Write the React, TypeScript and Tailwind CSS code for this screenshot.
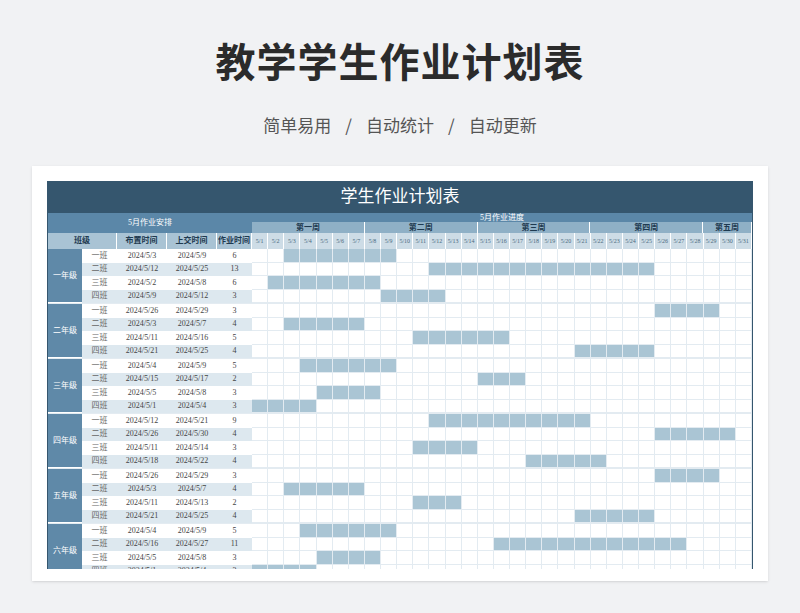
const grades = [
  { g: '一年级', rows: [[3, 9, 6], [12, 25, 13], [2, 8, 6], [9, 12, 3]] },
  { g: '二年级', rows: [[26, 29, 3], [3, 7, 4], [11, 16, 5], [21, 25, 4]] },
  { g: '三年级', rows: [[4, 9, 5], [15, 17, 2], [5, 8, 3], [1, 4, 3]] },
  { g: '四年级', rows: [[12, 21, 9], [26, 30, 4], [11, 14, 3], [18, 22, 4]] },
  { g: '五年级', rows: [[26, 29, 3], [3, 7, 4], [11, 13, 2], [21, 25, 4]] },
  { g: '六年级', rows: [[4, 9, 5], [16, 27, 11], [5, 8, 3], [1, 4, 3]] },
];
const cls = ['一班', '二班', '三班', '四班'];
const days = Array.from({ length: 31 }, (_, i) => i + 1);
const weeks = [['第一周', 7], ['第二周', 7], ['第三周', 7], ['第四周', 7], ['第五周', 3]] as const;
const F = { fontFamily: '"Liberation Serif","Noto Sans CJK SC",serif' };

export default function App() {
  return (
    <div className="w-[800px] h-[613px] bg-[#f1f2f4] flex flex-col items-center overflow-hidden" style={{ fontFamily: '"Noto Sans CJK SC",sans-serif' }}>
      <div className="mt-[34px] text-[40px] leading-[52px] font-bold text-[#2b2b2b] tracking-[1px]">教学学生作业计划表</div>
      <div className="mt-[27px] text-[17px] leading-[24px] text-[#555] flex gap-[14px]">
        <span>简单易用</span><span>/</span><span>自动统计</span><span>/</span><span>自动更新</span>
      </div>
      <div className="mt-[29px] w-[736px] h-[415px] bg-white shadow-sm pt-[15px] px-[15px] overflow-hidden">
        <div className="w-[706px] h-[388px] overflow-hidden border-x border-[#35566e] text-[8px]" style={F}>
          <div className="h-[32px] bg-[#35566e] text-white text-[17px] flex items-center justify-center">学生作业计划表</div>
          <div className="flex">
            <div className="w-[204px] shrink-0">
              <div className="h-[20px] bg-[#5b87a8] text-white flex items-center justify-center text-[8px]">5月作业安排</div>
              <div className="h-[16px] bg-[#a9c3d4] text-[#1e3a50] font-bold grid grid-cols-[69px_50px_50px_35px] text-[8px]">
                {['班级', '布置时间', '上交时间', '作业时间'].map(t => <div key={t} className="flex items-center justify-center border-r border-white">{t}</div>)}
              </div>
            </div>
            <div className="flex-1">
              <div className="h-[9px] bg-[#5b87a8] text-white flex items-center justify-center text-[8px]">5月作业进度</div>
              <div className="h-[11px] bg-[#8fb0c6] flex text-[#1e3a50] font-bold text-[8px]">
                {weeks.map(([w, n]) => <div key={w} style={{ flex: n }} className="flex items-center justify-center border-r border-white">{w}</div>)}
              </div>
              <div className="h-[16px] bg-[#cddce6] grid grid-cols-[repeat(31,1fr)] text-[#4a6a80] text-[6px]">
                {days.map(d => <div key={d} className="flex items-center justify-center border-r border-white">5/{d}</div>)}
              </div>
            </div>
          </div>
          {grades.map(gr => (
            <div key={gr.g} className="flex border-b border-[#e3ebf1]">
              <div className="w-[34px] shrink-0 bg-[#5f89a8] text-white flex items-center justify-center border-b border-white">{gr.g}</div>
              <div className="flex-1">
                {gr.rows.map((r, i) => (
                  <div key={i} className="h-[13.5px] flex">
                    <div className={`w-[170px] shrink-0 grid grid-cols-[35px_50px_50px_35px] text-[#444] ${i % 2 ? 'bg-[#dde8ef]' : 'bg-white'}`}>
                      <div className="flex items-center justify-center text-[#666]">{cls[i]}</div>
                      <div className="flex items-center justify-center">2024/5/{r[0]}</div>
                      <div className="flex items-center justify-center">2024/5/{r[1]}</div>
                      <div className="flex items-center justify-center">{r[2]}</div>
                    </div>
                    <div className="flex-1 grid grid-cols-[repeat(31,1fr)]">
                      {days.map(d => (
                        <div key={d} className={`border-r border-b border-[#e3ebf1] ${d >= r[0] && d <= r[1] ? 'bg-[#aac5d4]' : 'bg-white'}`} />
                      ))}
                    </div>
                  </div>
                ))}
              </div>
            </div>
          ))}
        </div>
      </div>
    </div>
  );
}
